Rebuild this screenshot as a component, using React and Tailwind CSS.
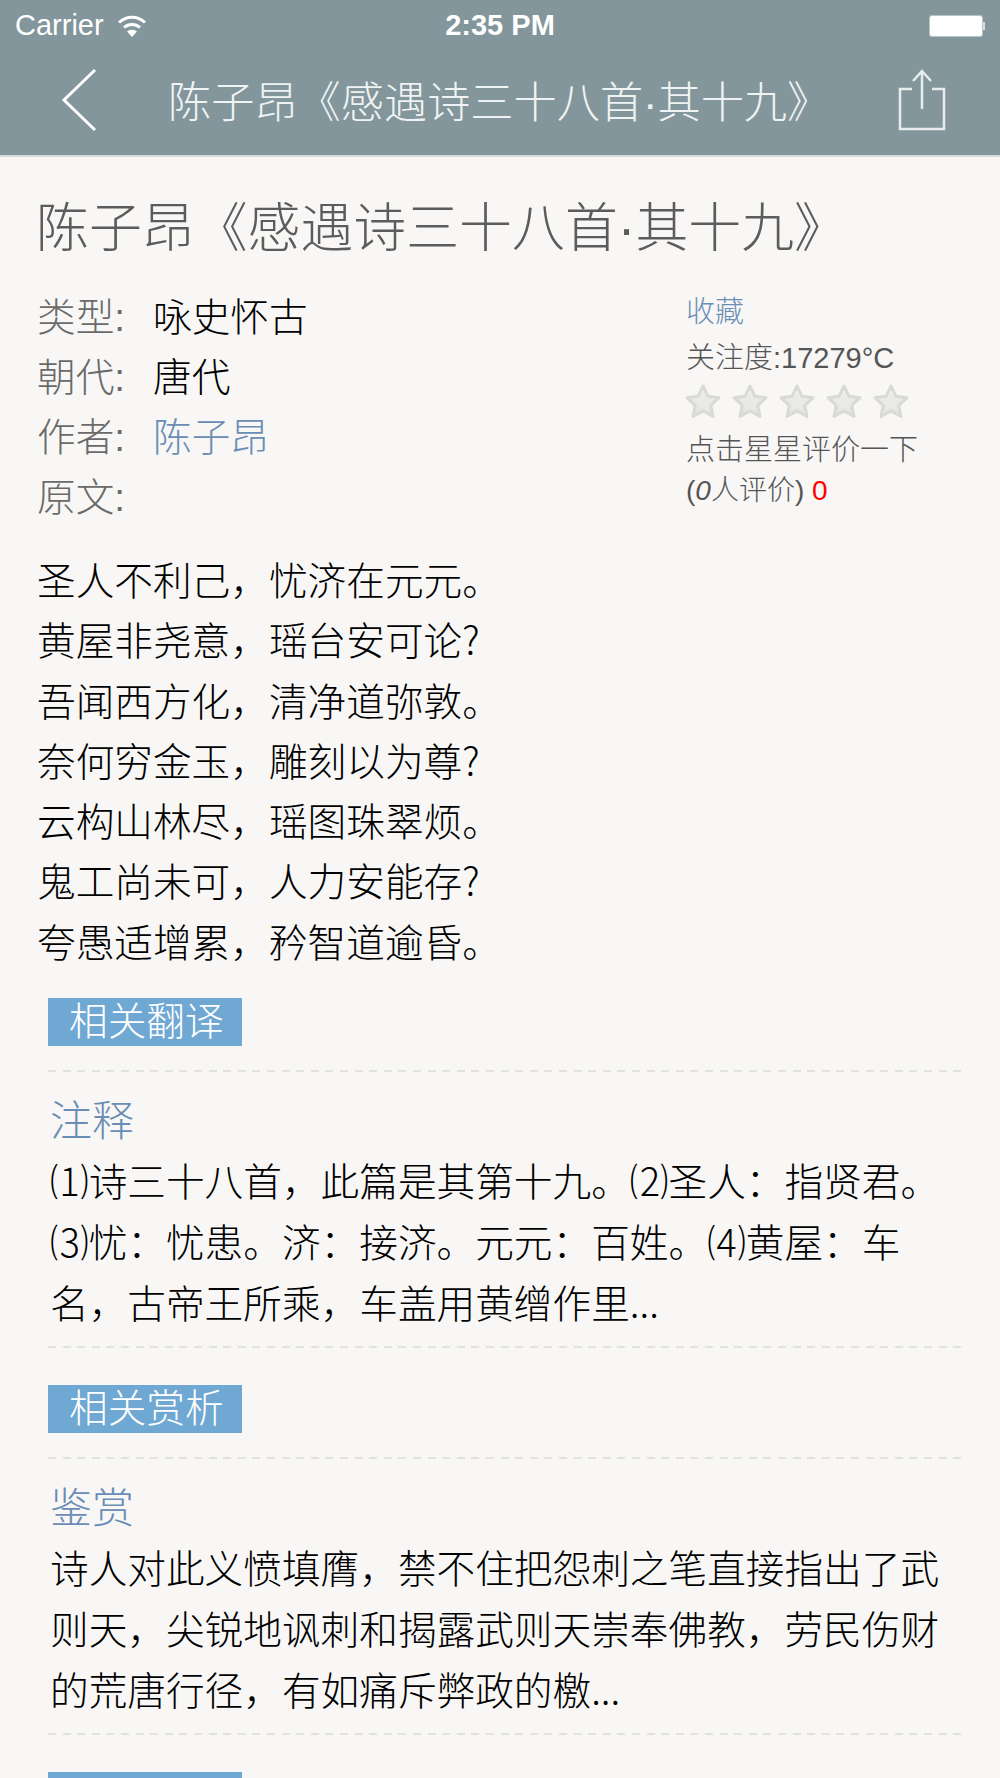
const FONT = "font-['Liberation_Sans','Noto_Sans_CJK_SC',sans-serif]";

function Star({ id }) {
  return (
    <svg width="38" height="38" viewBox="0 0 38 38">
      <defs>
        <linearGradient id={id} x1="0" y1="0" x2="0" y2="1">
          <stop offset="0" stopColor="#f0f0ed" />
          <stop offset="1" stopColor="#e2e2df" />
        </linearGradient>
      </defs>
      <path d="M19 3l4.900 10.300 11.100 1.400-8.200 7.700 2.200 11.100L19 28l-10 5.500 2.200-11.100L3 14.700l11.100-1.400z" fill={`url(#${id})`} stroke="#d9d9d6" strokeWidth="3" strokeLinejoin="round" />
      <path d="M19 11l2.600 5.500 6 .8-4.400 4.100 1.200 6-5.400-3-5.400 3 1.200-6-4.400-4.100 6-.8z" fill="#e9e9e6" />
    </svg>
  );
}

function Tag({ children }) {
  return (
    <div className="ml-[48px] h-[48px] w-[194px] bg-[#70a8d4] pl-[21px] text-[38.67px] font-light leading-[48px] text-white">
      {children}
    </div>
  );
}

function Dash() {
  return <div className="ml-[48px] mr-[32px] h-[2px] bg-[repeating-linear-gradient(to_right,#e2e2e0_0,#e2e2e0_8px,transparent_8px,transparent_14.6px)]" />;
}

function Section({ title, lines }) {
  return (
    <div>
      <Dash />
      <div className="ml-[50px] mt-[22px] h-[55px] text-[42px] font-light leading-[56px] text-[#6a8db5]">{title}</div>
      <div className="ml-[50px] whitespace-nowrap font-['Noto_Sans_CJK_SC',sans-serif] text-[38.67px] font-light leading-[61px] text-[#000]">
        {lines.map((l) => (
          <div key={l}>{l}</div>
        ))}
      </div>
    </div>
  );
}

export default function App() {
  const poem = [
    "圣人不利己，忧济在元元。",
    "黄屋非尧意，瑶台安可论?",
    "吾闻西方化，清净道弥敦。",
    "奈何穷金玉，雕刻以为尊?",
    "云构山林尽，瑶图珠翠烦。",
    "鬼工尚未可，人力安能存?",
    "夸愚适增累，矜智道逾昏。",
  ];
  return (
    <div className={`${FONT} h-[1778px] w-[1000px] overflow-hidden bg-[#f8f7f5]`}>
      <header className="h-[157px] border-b-2 border-[#d6d9da] bg-[#82969b] text-white">
        <div className="flex h-[52px] items-center justify-between pl-[15px] pr-[15px]">
          <div className="flex w-[200px] items-center gap-[13px] text-[29px]">
            <span>Carrier</span>
            <svg width="30" height="24" viewBox="0 0 30 24" fill="none" stroke="white" strokeWidth="3">
              <path d="M2 8.500C9.500 1.500 20.500 1.500 28 8.500" />
              <path d="M7 13.500C11.500 9.500 18.500 9.500 23 13.500" />
              <path d="M15 23l-5-5.500c3-2.300 7-2.300 10 0z" fill="white" stroke="none" />
            </svg>
          </div>
          <div className="text-[29px] font-bold">2:35 PM</div>
          <div className="flex w-[200px] justify-end">
            <div className="flex items-center">
              <div className="h-[22px] w-[54px] rounded-[3px] border border-[#b9c4c6] bg-white" />
              <div className="h-[8px] w-[2px] bg-white/70" />
            </div>
          </div>
        </div>
        <div className="flex h-[103px] items-center pl-[60px] pr-[54px]">
          <svg width="40" height="64" viewBox="0 0 40 64" fill="none" stroke="white" strokeWidth="3" className="mb-[8px] shrink-0">
            <path d="M35 2L4 32L35 62" />
          </svg>
          <div className="ml-[68px] mb-[2px] flex-1 whitespace-nowrap text-[43.2px] font-light leading-[50px] text-[#f0f3f3]">陈子昂《感遇诗三十八首·其十九》</div>
          <svg width="48" height="62" viewBox="0 0 48 62" fill="none" stroke="#e8ecec" strokeWidth="2.500" className="mb-[8px] shrink-0">
            <path d="M14 20H2V60H46V20H34" />
            <path d="M24 40V2M15 12L24 2L33 12" />
          </svg>
        </div>
      </header>

      <main>
        <h1 className="ml-[36px] mt-[40px] h-[64px] whitespace-nowrap text-[52.9px] font-light leading-[64px] text-[#5c5c5c]">
          陈子昂《感遇诗三十八首·其十九》
        </h1>
        <div className="mt-[27px] flex">
          <div className="ml-[37px] w-[649px] text-[38.67px] font-light leading-[60px] text-[#000]">
            <div className="flex"><span className="w-[116px] text-[#6a6a6a]">类型:</span><span>咏史怀古</span></div>
            <div className="flex"><span className="w-[116px] text-[#6a6a6a]">朝代:</span><span>唐代</span></div>
            <div className="flex"><span className="w-[116px] text-[#6a6a6a]">作者:</span><span className="text-[#6a8db5]">陈子昂</span></div>
            <div className="flex"><span className="w-[116px] text-[#6a6a6a]">原文:</span></div>
          </div>
          <div className="mt-[1px] h-[240px] text-[29px] font-light text-[#555]">
            <div className="h-[46px] leading-[46px] text-[#6a8db5]">收藏</div>
            <div className="h-[46px] leading-[46px]">关注度:17279°C</div>
            <div className="-ml-[2px] flex h-[42px] items-center gap-[9px]">
              <Star id="s1" /><Star id="s2" /><Star id="s3" /><Star id="s4" /><Star id="s5" />
            </div>
            <div className="mt-[2px] h-[50px] leading-[50px]">点击星星评价一下</div>
            <div className="-mt-[3px] h-[38px] text-[28px] leading-[38px]">(<i>0</i>人评价) <span className="text-[#ff0000]">0</span></div>
          </div>
        </div>

        <div className="ml-[37px] mt-[19px] font-['Noto_Sans_CJK_SC',sans-serif] text-[38.67px] font-light leading-[60.3px] text-[#000]">
          {poem.map((l) => <div key={l}>{l}</div>)}
        </div>

        <div className="mt-[28px]"><Tag>相关翻译</Tag></div>
        <div className="mt-[24px]">
          <Section
            title="注释"
            lines={[
              "⑴诗三十八首，此篇是其第十九。⑵圣人：指贤君。",
              "⑶忧：忧患。济：接济。元元：百姓。⑷黄屋：车",
              "名，古帝王所乘，车盖用黄缯作里...",
            ]}
          />
        </div>
        <div className="mt-[14px]"><Dash /></div>
        <div className="mt-[37px]"><Tag>相关赏析</Tag></div>
        <div className="mt-[24px]">
          <Section
            title="鉴赏"
            lines={[
              "诗人对此义愤填膺，禁不住把怨刺之笔直接指出了武",
              "则天，尖锐地讽刺和揭露武则天崇奉佛教，劳民伤财",
              "的荒唐行径，有如痛斥弊政的檄...",
            ]}
          />
        </div>
        <div className="mt-[14px]"><Dash /></div>
        <div className="mt-[37px]"><Tag>&nbsp;</Tag></div>
      </main>
    </div>
  );
}
